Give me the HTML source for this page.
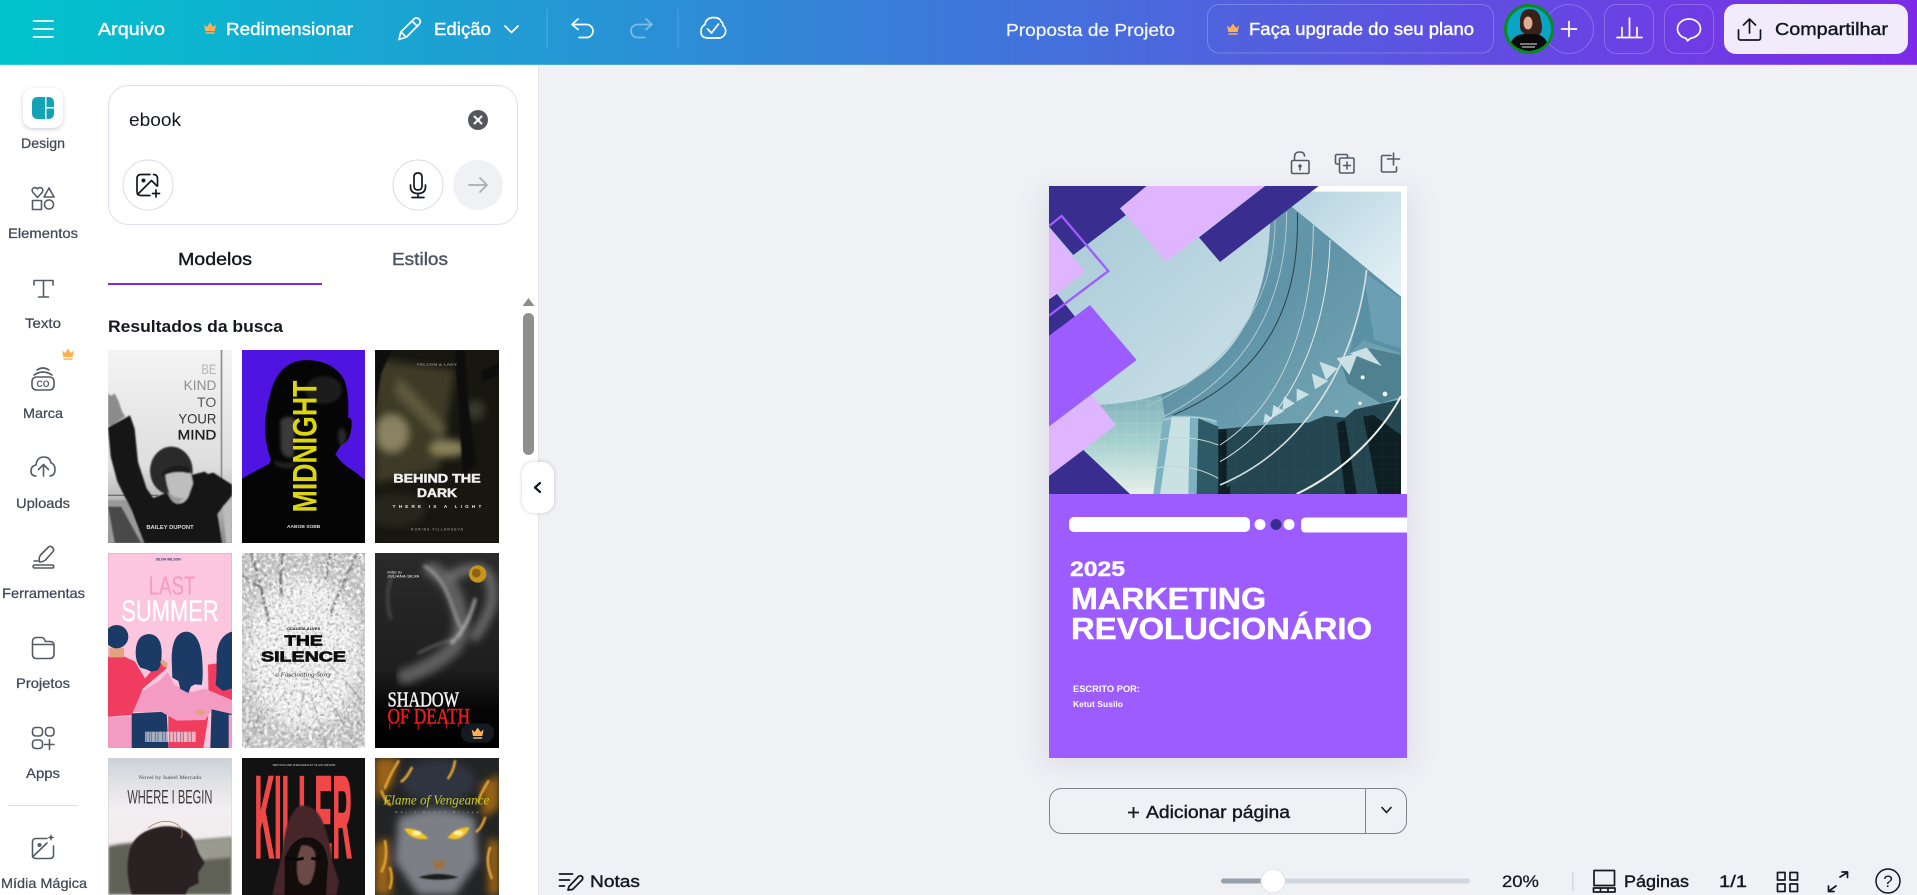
<!DOCTYPE html>
<html lang="pt-BR">
<head>
<meta charset="utf-8">
<title>Proposta de Projeto</title>
<style>
html,body{margin:0;padding:0;width:1917px;height:895px;overflow:hidden;background:#f0f1f5}
svg.root{position:absolute;left:0;top:0;display:block}
text{font-family:"Liberation Sans",sans-serif}
.m{stroke:currentColor;stroke-width:.4}
.s{font-size:14px;fill:#3f4957;color:#3f4957;text-anchor:start}
.s.m{stroke-width:.25}
.i{fill:none;stroke:#555b65;stroke-width:1.6;stroke-linecap:round;stroke-linejoin:round}
.h{fill:none;stroke:#fff;stroke-width:1.7;stroke-linecap:round;stroke-linejoin:round}
.d{fill:none;stroke:#14181f;stroke-width:1.7;stroke-linecap:round;stroke-linejoin:round}
</style>
</head>
<body>
<svg class="root" width="1917" height="895" viewBox="0 0 1917 895" xmlns="http://www.w3.org/2000/svg">
<defs>
<linearGradient id="hd" x1="0" x2="1" y1="0" y2="0"><stop offset="0" stop-color="#00c4cc"/><stop offset=".5" stop-color="#3e78da"/><stop offset="1" stop-color="#7d2ae8"/></linearGradient>
<linearGradient id="sky" x1="0" x2="1" y1="0" y2="1"><stop offset="0" stop-color="#a6c9d5"/><stop offset=".5" stop-color="#c3dbe4"/><stop offset=".8" stop-color="#eef4f6"/></linearGradient>
<linearGradient id="sky2" x1="0" x2="1" y1="0" y2="1"><stop offset="0" stop-color="#b5d3df"/><stop offset="1" stop-color="#e6f2f7"/></linearGradient>
<linearGradient id="bld" x1="0" x2="1" y1="0" y2="1"><stop offset="0" stop-color="#78a6b6"/><stop offset=".45" stop-color="#5f93a7"/><stop offset="1" stop-color="#7fb0ba"/></linearGradient>
<linearGradient id="glass" x1="0" x2="0" y1="0" y2="1"><stop offset="0" stop-color="#7fb1ba"/><stop offset=".5" stop-color="#a8d2d0"/><stop offset="1" stop-color="#e8f1ea"/></linearGradient>
<linearGradient id="cv1" x1="0" x2="0" y1="0" y2="1"><stop offset="0" stop-color="#f4f4f4"/><stop offset=".6" stop-color="#dedede"/><stop offset="1" stop-color="#8a8a8a"/></linearGradient>
<linearGradient id="cv6" x1="0" x2="0" y1="0" y2="1"><stop offset="0" stop-color="#2a2a2a"/><stop offset=".6" stop-color="#1e1e1e"/><stop offset=".8" stop-color="#050505"/><stop offset="1" stop-color="#000"/></linearGradient>
<linearGradient id="cv7" x1="0" x2="0" y1="0" y2="1"><stop offset="0" stop-color="#c9d2d9"/><stop offset=".18" stop-color="#e1e2e6"/><stop offset=".38" stop-color="#f3eef1"/><stop offset="1" stop-color="#efe9e6"/></linearGradient>
<filter id="b2"><feGaussianBlur stdDeviation="2"/></filter>
<filter id="b5"><feGaussianBlur stdDeviation="5"/></filter>
<filter id="b12"><feGaussianBlur stdDeviation="12"/></filter>
<filter id="b20"><feGaussianBlur stdDeviation="20"/></filter>
<filter id="nzw" x="0" y="0" width="100%" height="100%"><feTurbulence type="fractalNoise" baseFrequency=".09" numOctaves="3" seed="4"/><feColorMatrix values="0 0 0 0 1 0 0 0 0 1 0 0 0 0 1 2.4 0 0 0 -.95"/></filter>
<filter id="nzd" x="0" y="0" width="100%" height="100%"><feTurbulence type="fractalNoise" baseFrequency=".11" numOctaves="3" seed="9"/><feColorMatrix values="0 0 0 0 .3 0 0 0 0 .3 0 0 0 0 .3 2.4 0 0 0 -1.1"/></filter>
<pattern id="grid" width="32" height="34" patternUnits="userSpaceOnUse"><path d="M0 0H32M0 0V34" fill="none" stroke="#dfe9e9" stroke-width="1.500" opacity=".55"/></pattern>
<pattern id="gridd" width="44" height="38" patternUnits="userSpaceOnUse"><path d="M0 0H44M0 0V38" fill="none" stroke="#5f8792" stroke-width="1.500" opacity=".5"/></pattern>
<symbol id="crown" viewBox="0 0 14 12"><path d="M1 2.500l3 2.500L7 .5l3 4.500 3-2.500-1.300 6.500H2.300zM2.500 10.200h9v1.500h-9z" fill="#ffb054"/></symbol>
<clipPath id="img"><rect x="57" y="155" width="1056" height="907"/></clipPath>
</defs>

<!-- surfaces -->
<rect width="1917" height="895" fill="#f0f1f5"/>
<rect x="0" y="65" width="538" height="830" fill="#fff"/>
<rect x="538" y="65" width="1" height="830" fill="#e3e5ea"/>
<rect width="1917" height="65" fill="url(#hd)"/>
<rect y="64" width="1917" height="1" fill="#fff" opacity=".18"/>

<!-- header left -->
<path class="h" d="M33.500 21H53M33.500 29H53M33.500 37H53"/>
<text x="98" y="35" font-size="17.500" fill="#fff" color="#fff" class="m" textLength="67" lengthAdjust="spacingAndGlyphs">Arquivo</text>
<use href="#crown" x="203" y="22" width="14" height="12"/>
<text x="226" y="35" font-size="17.500" fill="#fff" color="#fff" class="m" textLength="127" lengthAdjust="spacingAndGlyphs">Redimensionar</text>
<path class="h" d="M399 39.500l1.800-7.500L414.500 18.500q2.300-1.500 4.500.5 2.200 2.200.8 4.500L406.500 37zM412 21l5.500 5.500M401 32l5 5"/>
<text x="434" y="35" font-size="17.500" fill="#fff" color="#fff" class="m" textLength="57" lengthAdjust="spacingAndGlyphs">Edição</text>
<path class="h" d="M505 26l6.500 6.500L518 26"/>
<rect x="546.500" y="9" width="1" height="40" fill="#fff" opacity=".2"/>
<path class="h" d="M578 19l-6 5.500 6 5M572 24.500h14.500a6.500 6.500 0 0 1 0 13H579"/>
<path class="h" opacity=".4" d="M646 19l6 5.500-6 5M652 24.500h-14.500a6.500 6.500 0 0 0 0 13H645"/>
<rect x="677.500" y="9" width="1" height="40" fill="#fff" opacity=".2"/>
<path class="h" d="M708 38h11a7 7 0 0 0 4-12.500q0-3-2-4 -1-4-8-4 -7 .5-8 7 -4 2-4 7 0 6.500 7 6.500zM707.500 29l4 4 7-9"/>
<text x="1006" y="36" font-size="17.500" fill="#f4f6ff" color="#f4f6ff" class="m" style="stroke-width:.25" textLength="169" lengthAdjust="spacingAndGlyphs">Proposta de Projeto</text>

<!-- header right -->
<rect x="1207.500" y="4.500" width="286" height="48.500" rx="12" fill="none" stroke="#fff" stroke-opacity=".22"/>
<use href="#crown" x="1226" y="23" width="14" height="12"/>
<text x="1249" y="35" font-size="17.500" fill="#fff" color="#fff" class="m" textLength="225" lengthAdjust="spacingAndGlyphs">Faça upgrade do seu plano</text>
<circle cx="1569" cy="29" r="24.500" fill="none" stroke="#fff" stroke-opacity=".22"/>
<path class="h" d="M1569 21.500v15M1561.500 29h15" stroke-width="2"/>
<circle cx="1529" cy="29" r="23.500" fill="#0aa5c5" stroke="#0b8a1f" stroke-width="3"/>
<path d="M1520 24q-1-14 9-15 11 0 12 12 3 9-2 14-5 2-8-1h-6q-6-3-5-10z" fill="#3a2018"/>
<ellipse cx="1528" cy="23" rx="4.500" ry="6.500" fill="#dcae90"/>
<path d="M1511 42q4-8 14-8h8q10 0 14 8-6 8-18 9-12-1-18-9z" fill="#0a0a0a"/>
<path d="M1520 44h17M1522 47h13" stroke="#e8e8e8" stroke-width="1"/>
<rect x="1604.500" y="4.500" width="49" height="49" rx="12" fill="none" stroke="#fff" stroke-opacity=".22"/>
<path class="h" d="M1617 37.500h25M1622 36V27.500M1629.500 36V18M1637 36V27.500"/>
<rect x="1664.500" y="4.500" width="49" height="49" rx="12" fill="none" stroke="#fff" stroke-opacity=".22"/>
<path class="h" d="M1689 19c-6.500 0-11.500 4.300-11.500 9.800 0 4.800 3.700 8.500 8.500 9.500l1.500 2.500 3-2.500c5.500-.8 10-4.500 10-9.500 0-5.500-5-9.800-11.500-9.800z"/>
<rect x="1724" y="4" width="184" height="50" rx="12" fill="#f1ebfc"/>
<path class="d" d="M1738.500 30v8q0 2 2 2h18q2 0 2-2v-8M1749.500 33V19.500M1743.500 25l6-6 6 6"/>
<text x="1775" y="35" font-size="17.500" fill="#14181f" color="#14181f" class="m" textLength="113" lengthAdjust="spacingAndGlyphs">Compartilhar</text>

<!-- sidebar -->
<rect x="23" y="88" width="40" height="40" rx="10" fill="#6a6f98" opacity=".32" filter="url(#b2)" transform="translate(0 1.500)"/>
<rect x="23" y="88" width="40" height="40" rx="10" fill="#fff"/>
<path d="M38 97h7v22h-7q-6 0-6-6v-10q0-6 6-6zM46.500 97H48q6 0 6 6v4h-7.500zM46.500 108.500H54V113q0 6-6 6h-1.500z" fill="#13a3b5"/>
<text class="s m" x="21" y="148" textLength="44" lengthAdjust="spacingAndGlyphs">Design</text>

<path class="i" d="M37.500 197.500l-4.500-5q-2-3 .5-4.500 2.500-1.300 4 1 1.500-2.300 4-1 2.500 1.500.5 4.500zM49 188l5 9h-10zM32.500 200.500h9v9h-9zM49 200a4.500 4.500 0 1 0 .01 0z"/>
<text class="s m" x="8" y="238" textLength="70" lengthAdjust="spacingAndGlyphs">Elementos</text>

<path class="i" d="M34 285v-4.500h19v4.500M43.500 280.500V297M38.500 297h10"/>
<text class="s m" x="25" y="328" textLength="36" lengthAdjust="spacingAndGlyphs">Texto</text>

<use href="#crown" x="61" y="348" width="14" height="12"/>
<path class="i" d="M37 377h12q5 0 5 5v3q0 5-5 5H37q-5 0-5-5v-3q0-5 5-5zM34 375q9-6 18 0M37 370q6-4 12 0"/>
<text x="36.500" y="387" font-size="9" font-weight="700" fill="#555b65" textLength="13" lengthAdjust="spacingAndGlyphs">CO</text>
<text class="s m" x="23" y="418" textLength="40" lengthAdjust="spacingAndGlyphs">Marca</text>

<path class="i" d="M36 476q-5 0-5-5t5-6q1-8 8-8 6 0 7 6 4 1 4 6.500 0 6-5 6.500M43.500 476v-11M38.500 469.500l5-5 5 5"/>
<text class="s m" x="16" y="508" textLength="54" lengthAdjust="spacingAndGlyphs">Uploads</text>

<path class="i" d="M39.500 562q-1-4 1-7l8-8q2-1.500 4 .5 2 2 .5 4l-7.500 8.500q-3 2-6 2zM34 565q-2 1.500 0 3h19q1.500-1.500 0-3zM34 561h4"/>
<text class="s m" x="2" y="598" textLength="83" lengthAdjust="spacingAndGlyphs">Ferramentas</text>

<path class="i" d="M32.500 642q0-4.500 4-4.500h5q2 0 3 2l1 2h4.500q4 0 4 4v8q0 5-4 5h-14q-3.500 0-3.500-5zM32.500 644.500h21.500"/>
<text class="s m" x="16" y="688" textLength="54" lengthAdjust="spacingAndGlyphs">Projetos</text>

<path class="i" d="M36 727.500h3q3.500 0 3.500 3.500v1.500q0 3.500-3.500 3.500h-3q-3.500 0-3.500-3.500V731q0-3.500 3.500-3.500zM49 727.500h1.500q3.500 0 3.500 3.500v1.500q0 3.500-3.500 3.500H49q-3.500 0-3.500-3.500V731q0-3.500 3.500-3.500zM36 740h3q3.500 0 3.500 3.500v1.500q0 3.500-3.500 3.500h-3q-3.500 0-3.500-3.500v-1.500q0-3.500 3.500-3.500zM49.500 739.500v10M44.500 744.500h9.500"/>
<text class="s m" x="26" y="778" textLength="34" lengthAdjust="spacingAndGlyphs">Apps</text>

<rect x="8" y="805" width="70" height="1" fill="#dfe1e5"/>
<path class="i" d="M47 838.500H36q-3.500 0-3.500 3.500v13q0 3.500 3.500 3.500h14q3.500 0 3.500-3.500v-9M32.500 857L47 843"/>
<circle cx="39.500" cy="845" r="2" fill="#555b65"/>
<path d="M51 834l1 2.500 2.500 1-2.500 1-1 2.500-1-2.500-2.500-1 2.500-1z" fill="#555b65"/>
<text class="s m" x="1" y="888" textLength="86" lengthAdjust="spacingAndGlyphs">Mídia Mágica</text>

<!-- search -->
<rect x="108.500" y="85.500" width="409" height="139" rx="20" fill="#fff" stroke="#e2dcf8"/>
<text x="129" y="126" font-size="18" fill="#14181f" textLength="52" lengthAdjust="spacingAndGlyphs">ebook</text>
<circle cx="478" cy="120" r="10" fill="#55575c"/>
<path d="M474.500 116.500l7 7M481.500 116.500l-7 7" stroke="#fff" stroke-width="2" stroke-linecap="round"/>
<circle cx="148" cy="185" r="25" fill="#fff" stroke="#d9dbdf"/>
<path class="d" d="M150 174.500h-9q-4 0-4 4v13q0 4 4 4h9M157.500 186v-7.500q0-4-4-4M137.500 194.500l14-14 5.500 5.500"/>
<circle cx="143.500" cy="180.500" r="2" fill="#14181f"/>
<path class="d" d="M156 190v7M152.500 193.500h7"/>
<circle cx="418" cy="185" r="25" fill="#fff" stroke="#d9dbdf"/>
<path class="d" d="M418 173q-4 0-4 4v9q0 4 4 4t4-4v-9q0-4-4-4zM410.500 185v1.500q0 7 7.500 7t7.500-7V185M418 193.500v3.500M412 197.500h12"/>
<circle cx="478" cy="185" r="25" fill="#f0f1f5"/>
<path d="M469 185h18M480 178l7 7-7 7" fill="none" stroke="#a9acb3" stroke-width="1.700" stroke-linecap="round" stroke-linejoin="round"/>

<!-- tabs -->
<text x="178" y="265" font-size="17.500" fill="#14181f" color="#14181f" class="m" textLength="74" lengthAdjust="spacingAndGlyphs">Modelos</text>
<text x="392" y="265" font-size="17.500" fill="#4c5360" color="#4c5360" class="m" textLength="56" lengthAdjust="spacingAndGlyphs">Estilos</text>
<rect x="108" y="283" width="214" height="2" fill="#7d2ae8"/>
<text x="108" y="332" font-size="17" font-weight="700" fill="#14181f" textLength="175" lengthAdjust="spacingAndGlyphs">Resultados da busca</text>

<!-- scrollbar -->
<path d="M522.500 306l6-8 6 8z" fill="#8d8d8d"/>
<rect x="523" y="313" width="11" height="142" rx="5.500" fill="#8f8f8f"/>
<rect x="522" y="462" width="32" height="51" rx="12" fill="#50556e" opacity=".28" filter="url(#b2)"/>
<rect x="522" y="462" width="32" height="51" rx="12" fill="#fff"/>
<path d="M540 483l-5 4.500 5 4.500" fill="none" stroke="#14181f" stroke-width="2.200" stroke-linecap="round" stroke-linejoin="round"/>

<!-- Cover 1 -->
<svg x="108" y="350" width="124" height="193" viewBox="0 0 372 579" preserveAspectRatio="none">
<rect width="372" height="579" fill="url(#cv1)"/>
<rect x="338" y="0" width="5" height="385" fill="#8e8e8e"/>
<rect x="0" y="434" width="150" height="4" fill="#6f6f6f"/>
<g filter="url(#b2)">
<path d="M0 130l10 8 10-8 12 24 10 30 10 16-40 26-12 2z" fill="#8c8c8c"/>
<path d="M0 450h60l40 129H0z" fill="#9a9a9a"/>
<path d="M0 470h40l60 109H20z" fill="#4a4a4a"/>
<path d="M0 232l66-36 14 40 10 100 26 80 20 28 30-12 100-50 10-4 40-10 56 36v32l-44 56 14 88H110L70 480 28 395 8 320z" fill="#141414"/>
<path d="M345 470l27-20v129h-18z" fill="#bcbcbc"/>
<ellipse cx="190" cy="362" rx="64" ry="72" fill="#2a2a2a"/>
<path d="M172 372q30-14 76-2 12 12 8 28l-16 44q-14 22-34 18-28-24-34-88z" fill="#bebebe"/>
<path d="M178 425q20 20 50 20l-18 16q-20 0-32-36z" fill="#9c9c9c"/>
<path d="M158 372q30-36 88-20l-4 18q-44-10-76 8z" fill="#1c1c1c"/>
<path d="M250 375l40-10 40 30-30 30-44-20z" fill="#181818"/>
</g>
<g text-anchor="end" font-size="42">
<text x="325" y="72" fill="#b4b4b4" textLength="45" lengthAdjust="spacingAndGlyphs">BE</text><text x="325" y="120" fill="#8f8f8f" textLength="98" lengthAdjust="spacingAndGlyphs">KIND</text><text x="325" y="171" fill="#5c5c5c" textLength="58" lengthAdjust="spacingAndGlyphs">TO</text><text x="325" y="220" fill="#353535" textLength="114" lengthAdjust="spacingAndGlyphs">YOUR</text><text x="325" y="269" fill="#1f1f1f" stroke="#1f1f1f" textLength="116" lengthAdjust="spacingAndGlyphs">MIND</text>
</g>
<text x="115" y="537" font-size="17" font-weight="700" fill="#ddd" textLength="142" lengthAdjust="spacingAndGlyphs">BAILEY DUPONT</text>
</svg>

<!-- Cover 2 -->
<svg x="242" y="350" width="123" height="193" viewBox="0 0 369 579" preserveAspectRatio="none">
<rect width="369" height="579" fill="#4f13e2"/>
<path d="M0 385l78-42q8-5 8-18-15-35-17-90-1-50 22-125 Q120 30 195 30q80 2 112 60 15 40 11 115 14-8 10 30-4 40-30 48l-18 30q20 30 55 50l34 27v189H0z" fill="#050505"/>
<g filter="url(#b5)"><path d="M115 210q30-20 45 0l-5 110q-25 10-38-20z" fill="#3a3a3a"/><ellipse cx="245" cy="120" rx="55" ry="42" fill="#1c1c1c"/><ellipse cx="300" cy="260" rx="12" ry="26" fill="#2a2a2a"/><path d="M95 330q40 15 70 2l-5 20q-35 10-60-8z" fill="#222"/></g>
<text transform="translate(224 487) rotate(-90)" x="0" y="0" font-size="102" font-weight="700" fill="#dcd60f" textLength="395" lengthAdjust="spacingAndGlyphs">MIDNIGHT</text>
<text x="135" y="534" font-size="13" font-weight="700" fill="#ddd" textLength="100" lengthAdjust="spacingAndGlyphs">AABOB SOBB</text>
</svg>

<!-- Cover 3 -->
<svg x="375" y="350" width="124" height="193" viewBox="0 0 372 579" preserveAspectRatio="none">
<rect width="372" height="579" fill="#171710"/>
<g filter="url(#b12)">
<path d="M20 30L240 60 190 360 0 400V100z" fill="#3e3a26"/>
<ellipse cx="50" cy="250" rx="50" ry="55" fill="#8a8260"/>
<ellipse cx="220" cy="295" rx="55" ry="26" fill="#8a8258"/>
<path d="M70 80l150 160-30 20L60 130z" fill="#5e5a3e"/>
<ellipse cx="300" cy="180" rx="30" ry="30" fill="#38382a"/>
<ellipse cx="60" cy="480" rx="90" ry="50" fill="#28261c"/>
</g>
<g filter="url(#b2)"><path d="M0 0h50L18 70 2 170 0 230zM240 0h30l8 150 25 190-40 40-10-200zM320 60l52-20v30l-50 30z" fill="#0a0a08"/></g>
<text x="126" y="47" font-size="9" font-weight="700" fill="#999" textLength="120" lengthAdjust="spacingAndGlyphs">FALCON &amp; LADY</text>
<text x="55" y="398" font-size="36" font-weight="700" fill="#f0f0f0" stroke="#f0f0f0" stroke-width="1.500" textLength="262" lengthAdjust="spacingAndGlyphs">BEHIND THE</text>
<text x="126" y="441" font-size="36" font-weight="700" fill="#f0f0f0" stroke="#f0f0f0" stroke-width="1.500" textLength="120" lengthAdjust="spacingAndGlyphs">DARK</text>
<text x="53" y="474" font-size="14" font-weight="700" fill="#e8e8e8" textLength="266" lengthAdjust="spacing">THERE IS A LIGHT</text>
<text x="108" y="541" font-size="10" font-weight="700" fill="#8c8c80" textLength="156" lengthAdjust="spacing">KORINA VILLANUEVA</text>
</svg>

<!-- Cover 4 -->
<svg x="108" y="553" width="124" height="195" viewBox="0 0 372 585" preserveAspectRatio="none">
<rect width="372" height="585" fill="#fcc6de"/>
<rect x="0" y="0" width="372" height="585" fill="none" stroke="#e0a4bf" stroke-width="3"/>
<text x="143" y="23" font-size="11" font-weight="700" fill="#37395f" textLength="75" lengthAdjust="spacingAndGlyphs">SILVIA WILSON</text>
<text x="122" y="124" font-size="78" fill="#f59abb" textLength="140" lengthAdjust="spacingAndGlyphs">LAST</text>
<text x="40" y="204" font-size="88" fill="#fff" stroke="#fff" textLength="292" lengthAdjust="spacingAndGlyphs">SUMMER</text>
<!-- people -->
<path d="M0 491h70v94H0z" fill="#f49bc4"/>
<path d="M71 481l105-5 5 109H71z" fill="#1b3a66"/>
<path d="M181 466l120 25-15 94H181z" fill="#f03c5f"/>
<path d="M311 451l61 5v129h-65z" fill="#1b3a66"/>
<path d="M362 585h10v-100h-10z" fill="#f49bc4"/>
<path d="M300 335l35-5 37 15v110l-70-10z" fill="#f03c5f"/>
<path d="M72 436l85-55 22-24 22 40 50 20 40-10 81 34v42l-60-14-20 32-85 2-50-28-30 2-55 0z" fill="#f49bc4"/>
<path d="M0 311l45-2 36 17 30 50 45-50 20 20-71 60-34 80-71 5z" fill="#f03c5f"/>
<rect x="4" y="285" width="44" height="28" fill="#e4a37f"/>
<circle cx="26" cy="251" r="35" fill="#1b3a66"/>
<path d="M83 300q0-55 40-57 38 2 38 58 0 40-14 52l-18 3-12-6-20-6q-14-18-14-44z" fill="#1b3a66"/>
<path d="M191 320q0-84 46-84 42 6 46 90 3 50-2 70l-20-2-12 6-8 20-24-12-6-24-18-10z" fill="#1b3a66"/>
<path d="M372 236q-42 12-46 70 0 65-3 90l22 18 27-8z" fill="#1b3a66"/>
<path d="M156 326l10-6 13 10-2 14-12-4zM258 475l25-8 12 14-18 8z" fill="#e4a37f"/>
<rect x="111" y="536" width="152" height="31" fill="#fff" opacity=".6"/>
<path d="M115 536v31M124 536v31M130 536v31M142 536v31M150 536v31M164 536v31M172 536v31M185 536v31M196 536v31M206 536v31M218 536v31M226 536v31M240 536v31M250 536v31" stroke="#44496e" stroke-width="3" opacity=".55"/>
</svg>

<!-- Cover 5 -->
<svg x="242" y="553" width="123" height="195" viewBox="0 0 369 585" preserveAspectRatio="none">
<rect width="369" height="585" fill="#c0c0c0"/>
<ellipse cx="184" cy="300" rx="170" ry="230" fill="#eeeeee" filter="url(#b20)"/>
<g fill="none" stroke="#6f6f6f" filter="url(#b2)" stroke-linecap="round">
<path d="M30 0l50 200M125 0q-15 50-5 130" stroke-width="8"/>
<path d="M345 0l-80 180M265 0l-15 80M0 70l55 35" stroke-width="7"/>
<path d="M0 450l90-70M10 585l60-140M369 450l-120-130M345 585L230 380M160 585l25-170M255 585l-50-170" stroke-width="3" stroke="#8a8a8a"/>
<path d="M0 585l130-170M369 520L270 480" stroke-width="2"/>
</g>
<rect width="369" height="585" filter="url(#nzd)"/>
<rect width="369" height="585" filter="url(#nzw)"/>
<text x="135" y="231" font-size="10.500" font-weight="700" fill="#111" textLength="100" lengthAdjust="spacingAndGlyphs">CLAUDIA ALVES</text>
<text x="127" y="278" font-size="44" font-weight="700" fill="#0c0c0c" stroke="#0c0c0c" stroke-width="2" textLength="115" lengthAdjust="spacingAndGlyphs">THE</text>
<text x="57" y="325" font-size="44" font-weight="700" fill="#0c0c0c" stroke="#0c0c0c" stroke-width="2" textLength="255" lengthAdjust="spacingAndGlyphs">SILENCE</text>
<text x="100" y="371" font-size="20" font-style="italic" fill="#333" textLength="168" lengthAdjust="spacingAndGlyphs" style="font-family:'Liberation Serif',serif">a Fascinating Story</text>
</svg>

<!-- Cover 6 -->
<svg x="375" y="553" width="124" height="195" viewBox="0 0 372 585" preserveAspectRatio="none">
<rect width="372" height="585" fill="url(#cv6)"/>
<g filter="url(#b12)" fill="none" stroke-linecap="round">
<path d="M170 50q60 30 80 110 20 60-10 120-60 60-150 90" stroke="#6e6e6e" stroke-width="46" opacity=".8"/>
<path d="M230 70q50-30 90-20 40 20 30 100-10 40-50 100" stroke="#7c7c7c" stroke-width="32" opacity=".75"/>
</g>
<g filter="url(#b5)" fill="none" stroke-linecap="round">
<path d="M150 40q50 30 75 100t30 80" stroke="#a0a0a0" stroke-width="10" opacity=".8"/>
<path d="M300 140q-20 80-70 130" stroke="#d0d0d0" stroke-width="9" opacity=".8"/>
<path d="M55 60q-30 60-8 135" stroke="#4a4a4a" stroke-width="9"/>
<path d="M130 300q60-30 130-50" stroke="#8a8a8a" stroke-width="6" opacity=".7"/>
</g>
<text x="36" y="61" font-size="11" fill="#ddd" textLength="44" lengthAdjust="spacingAndGlyphs">Written By</text>
<text x="36" y="74" font-size="11" font-weight="700" fill="#ccc" textLength="97" lengthAdjust="spacingAndGlyphs">JULIANA SILVA</text>
<circle cx="308" cy="63" r="26" fill="#c6971a"/>
<circle cx="304" cy="60" r="13" fill="#8a6410"/>
<text x="38" y="461" font-size="62" fill="#f2f2f2" textLength="214" lengthAdjust="spacingAndGlyphs" stroke="#f2f2f2" stroke-width="1.500" style="font-family:'Liberation Serif',serif">SHADOW</text>
<text x="38" y="511" font-size="66" fill="#ee1c1c" textLength="247" lengthAdjust="spacingAndGlyphs" stroke="#ee1c1c" stroke-width="1.500" style="font-family:'Liberation Serif',serif">OF DEATH</text>
<path d="M44 511v18M72 511v12M130 511v20M165 511v10M215 511v16M250 511v10" stroke="#b01010" stroke-width="4"/>
<rect x="258" y="511" width="99" height="58" rx="28" fill="#141a22"/>
<use href="#crown" x="287" y="522" width="42" height="36"/>
</svg>

<!-- Cover 7 -->
<svg x="108" y="758" width="124" height="137" viewBox="0 0 372 411" preserveAspectRatio="none">
<rect width="372" height="411" fill="url(#cv7)"/>
<path d="M0 265q70-15 120-10 120 0 252-15v171H0z" fill="#5e6056" filter="url(#b5)"/>
<path d="M230 250q80-10 142-12v60l-100 10z" fill="#9a9a8e" filter="url(#b5)"/>
<path d="M62 290q10-70 100-85 70-5 95 40l15 40 18 30-20 30 2 30-30 15-10 21H72q-20-60-10-121z" fill="#2a2420" filter="url(#b2)"/>
<path d="M120 210q40-30 80-15 30 15 20 45" fill="none" stroke="#b0805a" stroke-width="2.500"/>
<rect x="0" y="0" width="372" height="411" fill="none" stroke="#d4d0d4" stroke-width="3"/>
<text x="92" y="63" font-size="17" fill="#4a4648" textLength="188" lengthAdjust="spacingAndGlyphs" style="font-family:'Liberation Serif',serif">Novel by Isabel Mercado</text>
<text x="58" y="137" font-size="58" fill="#3f3c3e" textLength="255" lengthAdjust="spacingAndGlyphs">WHERE I BEGIN</text>
</svg>

<!-- Cover 8 -->
<svg x="242" y="758" width="123" height="137" viewBox="0 0 369 411" preserveAspectRatio="none">
<rect width="369" height="411" fill="#121212"/>
<text x="92" y="24" font-size="8.500" font-weight="700" fill="#aaa" textLength="188" lengthAdjust="spacingAndGlyphs">WRITTEN AND PUBLISHED BY OLIVIA WILSON</text>
<text x="38" y="298" font-size="350" font-weight="700" fill="#f04747" stroke="#f04747" stroke-width="7" textLength="292" lengthAdjust="spacingAndGlyphs">KILLER</text>
<path d="M174 143q45-3 65 42 25 55 32 125l20 60-8 41H92l10-50q12-40 20-85 12-110 52-133z" fill="#46282a" filter="url(#b2)"/>
<path d="M128 300q26-65 70-62 50 2 60 72l-6 101H128z" fill="#120c0b"/>
<path d="M178 262q30-5 42 22 5 50-14 90-20 18-36-5-15-50 8-107z" fill="#6b4a46" filter="url(#b2)"/>
<path d="M135 300q25 10 50 0M208 300q14 6 26 0" stroke="#0a0808" stroke-width="9" fill="none"/>
</svg>

<!-- Cover 9 -->
<svg x="375" y="758" width="124" height="137" viewBox="0 0 372 411" preserveAspectRatio="none">
<rect width="372" height="411" fill="#232425"/>
<g filter="url(#b12)">
<path d="M70 180q120-50 230 0l10 130-70 101H130L60 310z" fill="#7b8086"/>
<ellipse cx="190" cy="70" rx="110" ry="65" fill="#2f3540"/>
<path d="M0 0h70l-20 80L0 130zM320 80l52-30v100l-50 30zM0 260l40-20 10 171H0zM340 240l32 10v161h-32z" fill="#9a6414"/>
</g>
<g filter="url(#b2)" fill="none" stroke="#e0a030" stroke-linecap="round">
<path d="M70 10q-30 50-40 80M110 30q-15 30-30 40M240 10q-5 30-20 50M340 70q-25 40-30 60M20 100q10 30 25 40M330 180q-10 30-25 40M30 250q10 50-10 90M345 270q-15 40 5 90M45 330q10 30 0 60" stroke-width="8"/>
</g>
<g filter="url(#b2)">
<path d="M88 212q40-4 72 30-52 8-72-30zM284 208q-46 0-66 32 46 14 66-32z" fill="#f6c41f"/>
<ellipse cx="125" cy="225" rx="14" ry="7" fill="#fff2a0"/>
<ellipse cx="250" cy="225" rx="14" ry="7" fill="#fff2a0"/>
<path d="M130 358q60-20 120 0-60 14-120 0z" fill="#1d1a1a"/>
<path d="M172 300q18 25 38 0l-6 32-24 2z" fill="#a07040"/>
</g>
<text x="25" y="140" font-size="40" fill="#c9cc2e" textLength="318" lengthAdjust="spacingAndGlyphs" font-style="italic" style="font-family:'Liberation Serif',serif">Flame of Vengeance</text>
<text x="60" y="165" font-size="9" fill="#b0b2b0" textLength="250" lengthAdjust="spacing">Mario Gomez Ortega</text>
</svg>

<!-- page toolbar -->
<path class="i" stroke-width="1.500" d="M1291.500 162q0-1.500 1.500-1.500h14.500q1.500 0 1.500 1.500v10q0 1.500-1.500 1.500H1293q-1.500 0-1.500-1.500zM1294.500 160.500V157q0-5 5-5t5 4"/>
<circle cx="1300" cy="166" r="1.700" fill="#555b65"/><path d="M1300 167v3.500" stroke="#555b65" stroke-width="1.500"/>
<path class="i" stroke-width="1.500" d="M1339 164h-2q-1.500 0-1.500-1.500V156q0-1.500 1.500-1.500h9q1.500 0 1.500 1.500v1.500M1341 158h11.500q1.500 0 1.500 1.500v12q0 1.500-1.500 1.500H1341q-1.500 0-1.500-1.500v-12q0-1.500 1.500-1.500zM1347 162v7M1343.500 165.500h7"/>
<path class="i" stroke-width="1.500" d="M1391 155.500h-8q-1.500 0-1.500 1.500v13.500q0 1.500 1.500 1.500h12q1.500 0 1.500-1.500V167M1393.500 153v12M1387.500 159h12"/>

<!-- page -->
<rect x="1041" y="190" width="374" height="578" fill="#5a5f80" opacity=".1" filter="url(#b12)"/>
<svg x="1049" y="186" width="358" height="572" viewBox="57 138 1074 1716" preserveAspectRatio="none">
<rect x="57" y="138" width="1074" height="1716" fill="#fff"/>
<g clip-path="url(#img)">
<rect x="57" y="155" width="1056" height="907" fill="url(#sky)"/>
<rect x="785" y="155" width="328" height="320" fill="url(#sky2)"/>
<path d="M785 200L1113 470V1062H160V800L205 795C560 780 710 560 720 250z" fill="url(#bld)"/>
<path d="M785 200L1113 470V1062H160V800L205 795C560 780 710 560 720 250z" fill="url(#gridd)" opacity=".6"/>
<path d="M1010 390L1113 470V640L1000 600 960 640z" fill="#5a90a6"/>
<path d="M1000 395l113 80v150l-80-25z" fill="#6b9fb3"/>
<path d="M160 800l45-5q100-5 190-30l10 70-5 227H160z" fill="url(#glass)"/>
<path d="M160 800l45-5q100-5 190-30l10 70-5 227H160z" fill="url(#grid)"/>
<path d="M400 832q80-15 160 8l5 222H370z" fill="#7fb2c1"/>
<path d="M425 830h55l-5 232h-85z" fill="#c8e2e4"/>
<path d="M505 835l60 25v202h-65z" fill="#2e5a67"/>
<path d="M565 868q130-15 270-20l50-20 60 5 30-25 138-30v284H565z" fill="#234651"/>
<path d="M565 868l25 0v194h-25zM920 850l25-10 35 222h-35zM1000 830l30-5 83 60v177h-70zM560 1062l40-25v25z" fill="#0e1f24"/>
<path d="M565 868q130-15 270-20l50-20 60 5 30-25 138-30v284H565z" fill="url(#gridd)" opacity=".5"/>
<path d="M1020 625l93 20v125l-60 20-100-60-20-60z" fill="#4f8190"/>
<path d="M960 640l95 38-45-55zM920 655l38 50 25-65zM868 665l20 55 35-35zM845 700l10 48 40-25zM800 745l0 40 38-22zM762 770l-5 42 38-22zM730 795l-5 40 38-22zM705 820l-5 30 28-14z" fill="#c9e0e4"/>
<g fill="none" stroke="#d6dfdf" stroke-width="3">
<path d="M735 240C735 430 650 660 350 800" stroke="#aac3c6"/>
<path d="M770 215C770 450 680 690 400 830" stroke="#b4c9cc"/>
<path d="M802 218C810 480 720 700 430 825" stroke="#2c4148"/>
<path d="M850 255C850 500 780 780 570 915" stroke="#c8d2d2"/>
<path d="M900 300C895 560 790 840 570 965" stroke="#e4e8e6"/>
<path d="M1010 390C975 680 820 930 570 1035" stroke-width="5"/>
<path d="M1113 768C1060 870 950 990 800 1062" stroke-width="6" stroke="#eef1ee"/>
<path d="M400 840q80-20 160 5M385 900q90-20 180 15M375 985q100-20 190 30" stroke="#c4d5d6"/>
</g>
<g fill="#f4f8f8"><circle cx="998" cy="712" r="6"/><circle cx="1065" cy="762" r="7"/><circle cx="920" cy="815" r="5"/><circle cx="990" cy="790" r="5"/></g>
</g>
<!-- shapes -->
<path d="M57 138H350L270 205l18 20L130 345 57 260z" fill="#3a2d90"/>
<path d="M350 138H705L408 365 270 205z" fill="#dfb5ff"/>
<path d="M705 138H866L570 366 507 292z" fill="#3a2d90"/>
<path d="M57 262L165 395 57 480z" fill="#dfb5ff"/>
<path d="M57 478l24-16 54 68-78 58z" fill="#3a2d90"/>
<path d="M57 258L95 228 235 393 57 527" fill="none" stroke="#9d5cff" stroke-width="7"/>
<path d="M57 588L180 495 320 660 57 860z" fill="#9d5cff"/>
<path d="M57 860L185 765 258 855 57 1008z" fill="#dfb5ff"/>
<path d="M57 1008L160 930 300 1062H57z" fill="#3a2d90"/>
<rect x="57" y="1062" width="1074" height="792" fill="#9d5cff"/>
</svg>
<rect x="1069" y="517" width="181" height="15" rx="5" fill="#fff"/>
<circle cx="1260" cy="524.500" r="5.500" fill="#fff"/>
<circle cx="1276" cy="524.500" r="5.500" fill="#3a2d90"/>
<circle cx="1289" cy="524.500" r="5.500" fill="#fff"/>
<path d="M1301 522.500q0-5 5-5h101v15h-101q-5 0-5-5z" fill="#fff"/>
<text x="1070" y="576" font-size="21" font-weight="700" fill="#fff" stroke="#fff" stroke-width=".4" textLength="55" lengthAdjust="spacingAndGlyphs">2025</text>
<text x="1071" y="609" font-size="31" font-weight="700" fill="#fff" stroke="#fff" stroke-width=".5" textLength="195" lengthAdjust="spacingAndGlyphs">MARKETING</text>
<text x="1071" y="639" font-size="31" font-weight="700" fill="#fff" stroke="#fff" stroke-width=".5" textLength="301" lengthAdjust="spacingAndGlyphs">REVOLUCIONÁRIO</text>
<text x="1073" y="692" font-size="9.500" font-weight="700" fill="#fff" textLength="67" lengthAdjust="spacingAndGlyphs">ESCRITO POR:</text>
<text x="1073" y="707" font-size="8.500" font-weight="700" fill="#fff" textLength="50" lengthAdjust="spacing">Ketut  Susilo</text>

<!-- add page -->
<rect x="1049.500" y="788.500" width="357" height="45" rx="12" fill="none" stroke="#80838a"/>
<rect x="1365" y="789" width="1" height="44" fill="#80838a"/>
<path d="M1133.500 807v11M1128 812.500h11" stroke="#14181f" stroke-width="1.800"/>
<text x="1146" y="818" font-size="17.500" fill="#14181f" color="#14181f" class="m" textLength="144" lengthAdjust="spacingAndGlyphs">Adicionar página</text>
<path d="M1382 807.500l4.500 5 4.500-5" fill="none" stroke="#14181f" stroke-width="1.600" stroke-linecap="round" stroke-linejoin="round"/>

<!-- footer -->
<path class="d" stroke-width="1.500" d="M559.500 874h13M559.500 880h10M559.500 886h5M568 890l1-3.500 9.500-10q2-1.500 3.500 0t0 3.500l-9.500 9.500z"/>
<text x="590" y="887" font-size="17" fill="#14181f" color="#14181f" class="m" textLength="50" lengthAdjust="spacingAndGlyphs">Notas</text>
<rect x="1221" y="878.500" width="249" height="5" rx="2.500" fill="#d2d6de"/>
<rect x="1221" y="878.500" width="52" height="5" rx="2.500" fill="#9aa0aa"/>
<circle cx="1273" cy="881" r="12" fill="#fff" stroke="#dfe1e6"/>
<text x="1502" y="887" font-size="17" fill="#14181f" color="#14181f" class="m" style="stroke-width:.25" textLength="37" lengthAdjust="spacingAndGlyphs">20%</text>
<rect x="1572" y="872" width="1.500" height="19" fill="#d2d6de"/>
<path class="d" stroke-width="1.500" d="M1594 870.500h20.500v15H1594zM1593.500 888h21.500v4h-21.500zM1600.500 888v4M1608 888v4"/>
<text x="1624" y="887" font-size="17" fill="#14181f" color="#14181f" class="m" textLength="65" lengthAdjust="spacingAndGlyphs">Páginas</text>
<text x="1719" y="887" font-size="17" fill="#14181f" color="#14181f" class="m" textLength="28" lengthAdjust="spacingAndGlyphs">1/1</text>
<path class="d" stroke-width="1.500" d="M1777.500 872.500h7.500v7.500h-7.500zM1790 872.500h7.500v7.500H1790zM1777.500 884h7.500v7.500h-7.500zM1790 884h7.500v7.500H1790z"/>
<path class="d" stroke-width="1.500" d="M1840 877l7.500-4.500M1842 872h5.500v5.500M1836 886l-7 5M1834 891.500h-5.500V886"/>
<circle cx="1888" cy="881" r="12" fill="none" stroke="#14181f" stroke-width="1.500"/>
<text x="1888" y="887" font-size="17" fill="#14181f" text-anchor="middle">?</text>
</svg>
</body>
</html>
